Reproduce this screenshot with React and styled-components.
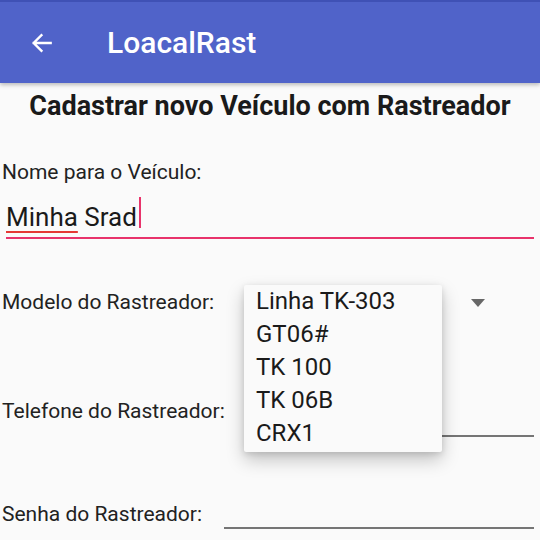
import React from "react"
import styled, { createGlobalStyle } from "styled-components"

const GlobalStyle = createGlobalStyle`
    html, body {
        margin: 0;
        padding: 0;
        background: #fafafa;
        font-family: Roboto, "Noto Sans", sans-serif;
    }
`

const Page = styled.div`
    position: relative;
    width: 540px;
    height: 540px;
    overflow: hidden;
    background: #fafafa;
    color: #1f1f1f;
`

// barra superior
const AppBar = styled.header`
    position: relative;
    z-index: 2;
    display: flex;
    align-items: center;
    height: 83px;
    padding-left: 29px;
    background: #5063c9;
    border-top: 2px solid #3f51b5;
    box-sizing: border-box;
    box-shadow: 0 2px 4px rgba(0, 0, 0, 0.25);
`

const BackButton = styled.button`
    display: flex;
    padding: 0;
    border: none;
    background: none;
    color: #fff;
`

const Title = styled.h1`
    margin: 0 0 0 52px;
    color: #fff;
    font-size: 30px;
    font-weight: 500;
    letter-spacing: 0;
`

const Heading = styled.h2`
    margin: 3px 0 0;
    height: 40px;
    line-height: 40px;
    text-align: center;
    font-size: 27px;
    font-weight: 700;
    color: #1a1a1a;
`

const Form = styled.form`
    display: flex;
    flex-direction: column;
    padding: 0 6px 0 2px;
`

const Label = styled.label`
    display: block;
    flex: none;
    font-size: 21px;
    line-height: 28px;
    color: #222;
`

const NameLabel = styled(Label)`
    margin-top: 32px;
`

const NameField = styled.div`
    display: flex;
    align-items: flex-start;
    height: 37px;
    margin: 14px 0 0 4px;
    border-bottom: 2px solid #e8336b;
    font-size: 26px;
    line-height: 34px;
    color: #1a1a1a;
`

const Misspelled = styled.span`
    text-decoration: underline solid #e53935;
    text-decoration-thickness: 2px;
    text-underline-offset: 5px;
`

const Cursor = styled.span`
    display: inline-block;
    width: 2px;
    height: 31px;
    margin: -3px 0 0 2px;
    background: #e8336b;
`

const Row = styled.div`
    display: flex;
    align-items: flex-start;
    height: ${(p) => p.$height}px;
    margin-top: ${(p) => p.$top || 0}px;
`

const SelectBox = styled.div`
    position: relative;
    flex: 1;
    height: 28px;
`

const Arrow = styled.span`
    position: absolute;
    top: 11px;
    left: 257px;
    width: 0;
    height: 0;
    border-left: 7.5px solid transparent;
    border-right: 7.5px solid transparent;
    border-top: 8px solid #676767;
`

const Underline = styled.div`
    flex: 1;
    margin-left: ${(p) => p.$gap}px;
    margin-top: ${(p) => p.$offset}px;
    height: 2px;
    background: #757575;
`

const Popup = styled.ul`
    position: absolute;
    z-index: 3;
    top: 285px;
    left: 244px;
    width: 198px;
    margin: 0;
    padding: 0 0 2px;
    list-style: none;
    background: #fafafa;
    border-radius: 2px;
    box-shadow: 0 8px 18px rgba(0, 0, 0, 0.22), 0 2px 6px rgba(0, 0, 0, 0.12);
`

const Option = styled.li`
    height: 33px;
    padding-left: 12px;
    font-size: 24px;
    line-height: 33px;
    color: #1a1a1a;
`

const BackArrow = () => (
    <svg width="26" height="26" viewBox="0 0 24 24" fill="none">
        <path d="M20 12H4.5M11.5 4.8 4.3 12l7.2 7.2" stroke="#fff" strokeWidth="2.2" strokeLinecap="square" />
    </svg>
)

const modelos = ["Linha TK-303", "GT06#", "TK 100", "TK 06B", "CRX1"]

export default function App() {
    return (
        <Page>
            <GlobalStyle />
            <AppBar>
                <BackButton type="button"><BackArrow /></BackButton>
                <Title>LoacalRast</Title>
            </AppBar>
            <Heading>Cadastrar novo Veículo com Rastreador</Heading>
            <Form>
                <NameLabel>Nome para o Veículo:</NameLabel>
                <NameField>
                    <Misspelled>Minha</Misspelled>&nbsp;Srad<Cursor />
                </NameField>
                <Row $top={49} $height={109}>
                    <Label>Modelo do Rastreador:</Label>
                    <SelectBox><Arrow /></SelectBox>
                </Row>
                <Row $height={103}>
                    <Label>Telefone do Rastreador:</Label>
                    <Underline $gap={30} $offset={38} />
                </Row>
                <Row $height={40}>
                    <Label>Senha do Rastreador:</Label>
                    <Underline $gap={22} $offset={27} />
                </Row>
            </Form>
            <Popup>
                {modelos.map((m) => <Option key={m}>{m}</Option>)}
            </Popup>
        </Page>
    )
}
